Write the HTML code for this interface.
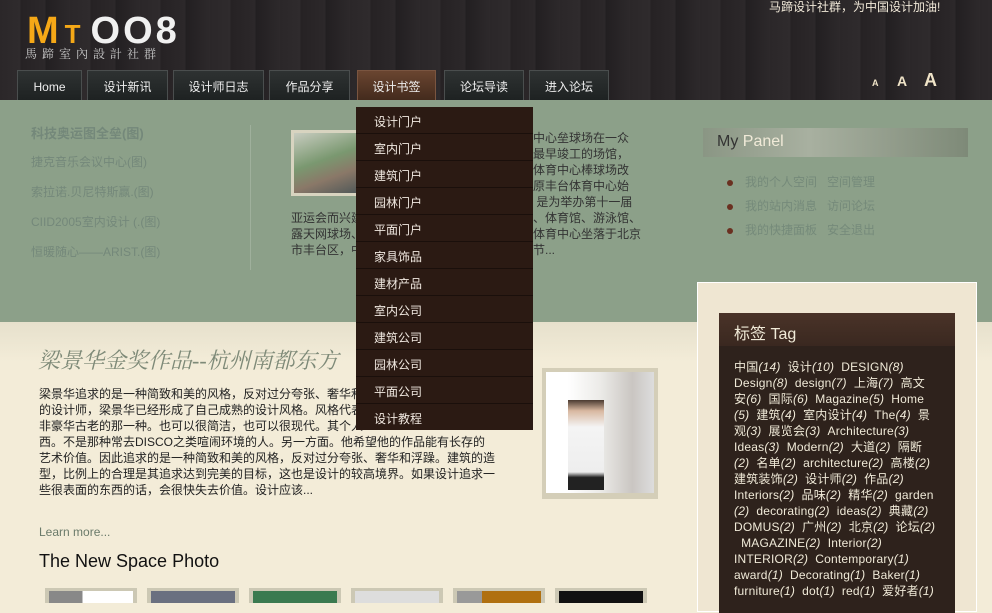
<!DOCTYPE html>
<html><head><meta charset="utf-8"><style>
*{margin:0;padding:0;box-sizing:border-box}
body{width:992px;height:603px;overflow:hidden;position:relative;background:#f3ecd8;font-family:"Liberation Sans","Noto Sans CJK SC",sans-serif;font-size:12px}
.a{position:absolute}
#hd{left:0;top:0;width:992px;height:100px;background:repeating-linear-gradient(90deg,#2b2729 0,#2f2b2d 20px,#262224 21px,#2c282a 45px,#221f21 46px,#2d292b 70px);}
.tab{position:absolute;top:70px;height:30px;background:linear-gradient(#2e3232,#1e2222);border:1px solid #4a4e4e;border-bottom:none;color:#eee;font-size:12px;text-align:center;line-height:32px}
.tab.on{background:linear-gradient(#6a4530,#3a2418);border-color:#7a5540}
#gr{left:0;top:100px;width:992px;height:222px;background:#8ca089}
.ll{color:#74887a;font-size:12px;left:31px}
#dd{left:356px;top:107px;width:177px;height:323px;background:#2b1a13}
#dd div{height:27px;line-height:30px;padding-left:18px;color:#f0e8e0;font-size:12px;border-bottom:1px solid #1a0f0b}
.t{color:#333;font-size:12px;line-height:16px}
.th{top:588px;width:92px;height:15px;background:#ccc8b4;padding:3px 4px 0}
.th i{display:block;height:12px}
.dot{display:inline-block;width:6px;height:6px;border-radius:50%;background:#6a3020;margin-right:12px;vertical-align:middle}
</style></head><body>
<div id="hd" class="a"></div>
<div class="a" style="left:27px;top:10px;font:bold 38px 'Liberation Sans',sans-serif;color:#f0f0f0;white-space:nowrap"><span style="color:#f5a817">M</span><span style="color:#f5a817;font-size:26px;margin-left:6px">T</span><span style="margin-left:10px;letter-spacing:3px">OO8</span></div>
<div class="a" style="left:25px;top:45px;color:#ccc;font-size:12px;letter-spacing:5px;font-family:'Noto Serif CJK SC',serif">馬蹄室內設計社群</div>
<div class="a" style="left:769px;top:-2px;color:#f0e8d8;font-size:12px">马蹄设计社群，为中国设计加油!</div>
<div class="a" style="left:872px;top:78px;color:#f0e4c8;font-weight:bold;font-size:9px">A</div>
<div class="a" style="left:897px;top:73px;color:#f0e4c8;font-weight:bold;font-size:14px">A</div>
<div class="a" style="left:924px;top:70px;color:#f0e4c8;font-weight:bold;font-size:18px">A</div>
<div class="tab" style="left:17px;width:65px">Home</div>
<div class="tab" style="left:87px;width:81px">设计新讯</div>
<div class="tab" style="left:173px;width:91px">设计师日志</div>
<div class="tab" style="left:269px;width:81px">作品分享</div>
<div class="tab on" style="left:357px;width:79px;height:37px">设计书签</div>
<div class="tab" style="left:444px;width:80px">论坛导读</div>
<div class="tab" style="left:529px;width:80px">进入论坛</div>
<div id="gr" class="a"></div>
<div class="a ll" style="top:123px;font-weight:bold;font-size:13px">科技奥运图全垒(图)</div>
<div class="a ll" style="top:153px">捷克音乐会议中心(图)</div>
<div class="a ll" style="top:183px">索拉诺.贝尼特斯赢.(图)</div>
<div class="a ll" style="top:213px">CIID2005室内设计 (.(图)</div>
<div class="a ll" style="top:243px">恒暖随心——ARIST.(图)</div>
<div class="a" style="left:250px;top:125px;width:1px;height:145px;background:#9fb09c"></div>
<div class="a" style="left:291px;top:130px;width:70px;height:66px;background:#d8d4c0;padding:3px"><div style="height:100%;background:linear-gradient(160deg,#c8ccc0,#7a9870 45%,#8a7868 70%,#505858)"></div></div>
<div class="a t" style="left:533px;top:130px;width:110px">中心垒球场在一众<br>最早竣工的场馆，<br>体育中心棒球场改<br>原丰台体育中心始<br>&nbsp;是为举办第十一届<br>、体育馆、游泳馆、<br>体育中心坐落于北京<br>节...</div>
<div class="a t" style="left:291px;top:210px">亚运会而兴建<br>露天网球场、<br>市丰台区，中</div>
<div class="a" style="left:703px;top:128px;width:265px;height:29px;background:linear-gradient(90deg,#8a9684,#a8b0a0 40%,#7e8a78);"></div>
<div class="a" style="left:717px;top:133px;font-size:16px;color:#333">My <span style="color:#f0ead8">Panel</span></div>
<div class="a" style="left:727px;top:170px;color:#758a7a;font-size:12px;line-height:24px;white-space:nowrap">
<span class="dot"></span>我的个人空间&nbsp;&nbsp;&nbsp;空间管理<br>
<span class="dot"></span>我的站内消息&nbsp;&nbsp;&nbsp;访问论坛<br>
<span class="dot"></span>我的快捷面板&nbsp;&nbsp;&nbsp;安全退出</div>
<div class="a" style="left:0;top:322px;width:992px;height:40px;background:linear-gradient(#e6e0cc,#f3ecd8)"></div>
<div class="a" style="left:38px;top:344px;font-size:22px;font-style:italic;color:#7e8a78;font-family:'Liberation Serif','Noto Serif CJK SC',serif">梁景华金奖作品--杭州南都东方</div>
<div class="a t" style="left:39px;top:386px;width:470px;color:#222;white-space:nowrap">梁景华追求的是一种简致和美的风格，反对过分夸张、奢华和<br>的设计师，梁景华已经形成了自己成熟的设计风格。风格代表<br>非豪华古老的那一种。也可以很简洁，也可以很现代。其个人<br>西。不是那种常去DISCO之类喧闹环境的人。另一方面。他希望他的作品能有长存的<br>艺术价值。因此追求的是一种简致和美的风格，反对过分夸张、奢华和浮躁。建筑的造<br>型，比例上的合理是其追求达到完美的目标，这也是设计的较高境界。如果设计追求一<br>些很表面的东西的话，会很快失去价值。设计应该...</div>
<div class="a" style="left:542px;top:368px;width:116px;height:131px;background:#d4ceb8"></div>
<div class="a" style="left:546px;top:372px;width:108px;height:121px;background:linear-gradient(90deg,#fff 20%,#ecebe8 50%,#cac6c2 80%,#ddd)"></div>
<div class="a" style="left:568px;top:400px;width:36px;height:90px;background:linear-gradient(#4a3a30 0,#d8b8a0 12%,#f4f4f4 30%,#eee 80%,#222 86%)"></div>
<div class="a" style="left:39px;top:525px;color:#6a7a6a;font-size:12px">Learn more...</div>
<div class="a" style="left:39px;top:551px;color:#111;font-size:18px">The New Space Photo</div>
<div class="a th" style="left:45px"><i style="background:linear-gradient(90deg,#888 40%,#fff 40%)"></i></div>
<div class="a th" style="left:147px"><i style="background:#6a7080"></i></div>
<div class="a th" style="left:249px"><i style="background:#3a7a50"></i></div>
<div class="a th" style="left:351px"><i style="background:#ddd"></i></div>
<div class="a th" style="left:453px"><i style="background:linear-gradient(90deg,#999 30%,#b07010 30%)"></i></div>
<div class="a th" style="left:555px"><i style="background:#111"></i></div>
<div class="a" style="left:697px;top:282px;width:280px;height:330px;background:#efe6d2;border:1px solid #fff"></div>
<div class="a" style="left:719px;top:313px;width:236px;height:300px;background:#2e221c"></div>
<div class="a" style="left:719px;top:313px;width:236px;height:33px;background:linear-gradient(#4a3328,#3a2820)"></div>
<div class="a" style="left:734px;top:320px;color:#f0ead8;font-size:16px">标签 Tag</div>
<div class="a" style="left:734px;top:359px;color:#f0ead8;font-size:12px;line-height:16px;white-space:nowrap;letter-spacing:0.2px">中国<i>(14)</i>&nbsp; 设计<i>(10)</i>&nbsp; DESIGN<i>(8)</i><br>Design<i>(8)</i>&nbsp; design<i>(7)</i>&nbsp; 上海<i>(7)</i>&nbsp; 高文<br>安<i>(6)</i>&nbsp; 国际<i>(6)</i>&nbsp; Magazine<i>(5)</i>&nbsp; Home<br><i>(5)</i>&nbsp; 建筑<i>(4)</i>&nbsp; 室内设计<i>(4)</i>&nbsp; The<i>(4)</i>&nbsp; 景<br>观<i>(3)</i>&nbsp; 展览会<i>(3)</i>&nbsp; Architecture<i>(3)</i><br>Ideas<i>(3)</i>&nbsp; Modern<i>(2)</i>&nbsp; 大道<i>(2)</i>&nbsp; 隔断<br><i>(2)</i>&nbsp; 名单<i>(2)</i>&nbsp; architecture<i>(2)</i>&nbsp; 高楼<i>(2)</i><br>建筑装饰<i>(2)</i>&nbsp; 设计师<i>(2)</i>&nbsp; 作品<i>(2)</i><br>Interiors<i>(2)</i>&nbsp; 品味<i>(2)</i>&nbsp; 精华<i>(2)</i>&nbsp; garden<br><i>(2)</i>&nbsp; decorating<i>(2)</i>&nbsp; ideas<i>(2)</i>&nbsp; 典藏<i>(2)</i><br>DOMUS<i>(2)</i>&nbsp; 广州<i>(2)</i>&nbsp; 北京<i>(2)</i>&nbsp; 论坛<i>(2)</i><br>&nbsp; MAGAZINE<i>(2)</i>&nbsp; Interior<i>(2)</i><br>INTERIOR<i>(2)</i>&nbsp; Contemporary<i>(1)</i><br>award<i>(1)</i>&nbsp; Decorating<i>(1)</i>&nbsp; Baker<i>(1)</i><br>furniture<i>(1)</i>&nbsp; dot<i>(1)</i>&nbsp; red<i>(1)</i>&nbsp; 爱好者<i>(1)</i></div>
<div id="dd" class="a">
<div>设计门户</div><div>室内门户</div><div>建筑门户</div><div>园林门户</div><div>平面门户</div><div>家具饰品</div><div>建材产品</div><div>室内公司</div><div>建筑公司</div><div>园林公司</div><div>平面公司</div><div style="border:none">设计教程</div>
</div>
</body></html>
